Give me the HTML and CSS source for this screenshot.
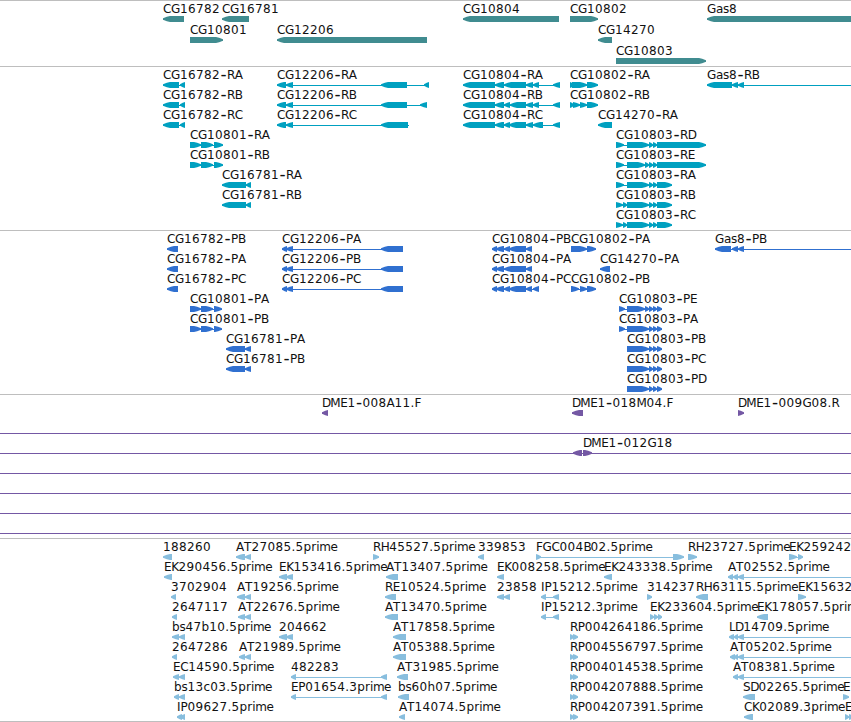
FILE: index.html
```
<!DOCTYPE html>
<html lang="en">
<head>
    <meta charset="UTF-8">
    <meta name="viewport" content="width=device-width, initial-scale=1.0">
    <title>Genome Tracks</title>
    <link rel="stylesheet" href="styles.css">
</head>
<body>

<main class="browser">
    <section class="track genes" id="genes"></section>
    <section class="track transcripts" id="transcripts"></section>
    <section class="track proteins" id="proteins"></section>
    <section class="track clones" id="clones"></section>
    <section class="track ests" id="ests"></section>
</main>

<script src="tracks.js"></script>
</body>
</html>
```
FILE: styles.css
```
body {
    margin: 0;
    background-color: #fff;
    overflow: hidden;
}
.browser {
    display: flex;
    flex-direction: column;
    width: 851px;
    height: 722px;
    overflow: hidden;
}
.track {
    box-sizing: border-box;
    border-top: 1px solid #bebebe;
    flex: none;
}
.track svg {
    display: block;
    width: 100%;
    height: 100%;
}
.genes {
    height: 66px;
    color: #408c90;
}
.transcripts {
    height: 164px;
    color: #00a0c0;
}
.proteins {
    height: 164px;
    color: #3070d0;
}
.clones {
    height: 144px;
    color: #7458a4;
}
.ests {
    height: 184px;
    color: #88bede;
    border-bottom: 1px solid #bebebe;
}
.label {
    font-family: "DejaVu Sans", sans-serif;
    font-size: 12px;
    fill: #111;
}
.label .dash {
    font-size: 17px;
}
.exon {
    fill: currentColor;
}
.intron {
    fill: currentColor;
    shape-rendering: crispEdges;
}
```
FILE: tracks.js
```
const SVG_NS = 'http://www.w3.org/2000/svg';
const VIEW_WIDTH = 851;
const HEAD = 7;

// Pixel advances for the labels, digits are 8
const ADVANCE = {
    A: 8, B: 7, C: 8, D: 8.2, E: 7.2, F: 6.5, G: 9, H: 8.5, I: 3.5, K: 7.2, L: 6, M: 10, P: 7, R: 7.8, S: 7.2, T: 7.5,
    a: 7, b: 7.6, c: 6.6, e: 7, h: 7.6, i: 3, m: 11.2, p: 7.7, r: 5, s: 6, '-': 7, '.': 4
};

// [row, label, direction, exons as start-end, end of the intron line]
const tracks = {
    genes: { step: 21, features: [
        [0, 'CG16782', '<', '163-184'],
        [0, 'CG16781', '<', '222-249'],
        [1, 'CG10801', '>', '190-223'],
        [1, 'CG12206', '<', '277-427'],
        [0, 'CG10804', '<', '463-559'],
        [0, 'CG10802', '>', '570-598'],
        [1, 'CG14270', '<', '598-612'],
        [2, 'CG10803', '>', '616-706'],
        [0, 'Gas8', '<', '707-870']
    ] },
    transcripts: { step: 20, features: [
        [0, 'CG16782-RA', '<', '163-179 180-185'],
        [1, 'CG16782-RB', '<', '163-179 180-185'],
        [2, 'CG16782-RC', '<', '163-179 180-185'],
        [3, 'CG10801-RA', '>', '190-201 201-213 214-223'],
        [4, 'CG10801-RB', '>', '190-201 201-213 214-223'],
        [5, 'CG16781-RA', '<', '222-246 246-251'],
        [6, 'CG16781-RB', '<', '222-246 246-251'],
        [0, 'CG12206-RA', '<', '277-286 286-293 381-407 424-429'],
        [1, 'CG12206-RB', '<', '277-286 286-293 381-407 420-427'],
        [2, 'CG12206-RC', '<', '277-286 286-293 381-408', 409],
        [0, 'CG10804-RA', '<', '463-495 495-504 504-526 526-533 533-539 553-560'],
        [1, 'CG10804-RB', '<', '463-495 495-504 504-510 510-526 526-533 533-539 553-560'],
        [2, 'CG10804-RC', '<', '463-495 495-504 504-510 509-526 526-533 533-543 553-560'],
        [0, 'CG10802-RA', '>', '570-574 572-587 587-598'],
        [1, 'CG10802-RB', '>', '570-574 573-580 580-587 587-598'],
        [2, 'CG14270-RA', '<', '598-612'],
        [3, 'CG10803-RD', '>', '616-624 627-649 649-653 653-657 657-706'],
        [4, 'CG10803-RE', '>', '616-624 627-645 645-649 649-653 653-657 657-706'],
        [5, 'CG10803-RA', '>', '616-624 627-649 649-653 653-657 657-672'],
        [6, 'CG10803-RB', '>', '616-623 623-627 627-649 649-653 653-657 657-672'],
        [7, 'CG10803-RC', '>', '616-623 623-627 627-649 649-653 653-657 657-672'],
        [0, 'Gas8-RB', '<', '707-732 732-738 738-744', 860]
    ] },
    proteins: { step: 20, features: [
        [0, 'CG16782-PB', '<', '167-178'],
        [1, 'CG16782-PA', '<', '167-178'],
        [2, 'CG16782-PC', '<', '167-178'],
        [3, 'CG10801-PA', '>', '190-201 201-213 214-222'],
        [4, 'CG10801-PB', '>', '190-201 201-213 214-222'],
        [5, 'CG16781-PA', '<', '226-245 245-251'],
        [6, 'CG16781-PB', '<', '226-245 245-251'],
        [0, 'CG12206-PA', '<', '282-287 286-293 381-403'],
        [1, 'CG12206-PB', '<', '282-287 286-293 381-403'],
        [2, 'CG12206-PC', '<', '282-287 286-293 381-403'],
        [0, 'CG10804-PB', '<', '492-497 496-504 504-510 509-526 526-532'],
        [1, 'CG10804-PA', '<', '492-497 496-504 504-526 526-532'],
        [2, 'CG10804-PC', '<', '492-497 496-504 504-510 509-526 526-532 533-539'],
        [0, 'CG10802-PA', '>', '571-587 587-596'],
        [2, 'CG10802-PB', '>', '571-579 580-587 587-596'],
        [1, 'CG14270-PA', '<', '600-610'],
        [3, 'CG10803-PE', '>', '619-625 627-645 645-649 649-653 653-657 657-662'],
        [4, 'CG10803-PA', '>', '619-625 627-649 649-653 653-657 657-662'],
        [5, 'CG10803-PB', '>', '627-649 649-653 653-657 657-662'],
        [6, 'CG10803-PC', '>', '627-649 649-653 653-657 657-662'],
        [7, 'CG10803-PD', '>', '627-649 649-653 653-657 657-662'],
        [0, 'Gas8-PB', '<', '715-731 732-738 738-744', 860]
    ] },
    clones: { step: 20, rules: [1, 2, 3, 4, 5, 6], features: [
        [0, 'DME1-008A11.F', '<', '322-328'],
        [0, 'DME1-018M04.F', '<', '572-583'],
        [0, 'DME1-009G08.R', '>', '738-744'],
        [2, '', '<', '573-582'],
        [2, 'DME1-012G18', '>', '583-592']
    ] },
    ests: { step: 20, features: [
        [0, '188260', '<', '163-172'],
        [1, 'EK290456.5prime', '<', '164-172'],
        [2, '3702904', '<', '171-176'],
        [3, '2647117', '<', '172-177'],
        [4, 'bs47b10.5prime', '<', '172-179 179-185'],
        [5, '2647286', '<', '172-177'],
        [6, 'EC14590.5prime', '<', '173-179 179-185'],
        [7, 'bs13c03.5prime', '<', '174-179 179-185'],
        [8, 'IP09627.5prime', '<', '177-182 180-185'],
        [0, 'AT27085.5prime', '<', '236-245 245-251'],
        [2, 'AT19256.5prime', '<', '237-245 245-251'],
        [3, 'AT22676.5prime', '<', '238-245 245-251'],
        [5, 'AT21989.5prime', '<', '239-245 245-251'],
        [1, 'EK153416.5prime', '<', '279-287 286-293'],
        [4, '204662', '<', '279-287 286-293'],
        [6, '482283', '<', '291-296 381-387'],
        [7, 'EP01654.3prime', '<', '291-296 381-387'],
        [0, 'RH45527.5prime', '>', '373-379'],
        [1, 'AT13407.5prime', '<', '386-398'],
        [2, 'RE10524.5prime', '<', '385-396'],
        [3, 'AT13470.5prime', '<', '385-398'],
        [4, 'AT17858.5prime', '<', '393-406'],
        [5, 'AT05388.5prime', '<', '393-406'],
        [6, 'AT31985.5prime', '<', '397-408'],
        [7, 'bs60h07.5prime', '<', '398-409'],
        [8, 'AT14074.5prime', '<', '399-405'],
        [0, '339853', '<', '478-484'],
        [1, 'EK008258.5prime', '<', '497-504'],
        [2, '23858', '<', '497-504 504-510'],
        [0, 'FGC004B02.5prime', '>', '536-541 673-684'],
        [1, 'EK243338.5prime', '<', '604-612'],
        [2, 'IP15212.5prime', '<', '541-546 553-559'],
        [3, 'IP15212.3prime', '<', '541-546 553-559'],
        [2, '314237', '>', '647-652'],
        [3, 'EK233604.5prime', '>', '650-654 654-658 658-662'],
        [4, 'RP004264186.5prime', '>', '570-574 573-578'],
        [5, 'RP004556797.5prime', '>', '570-574 573-578'],
        [6, 'RP004014538.5prime', '>', '570-574 573-578'],
        [7, 'RP004207888.5prime', '>', '570-574 573-578'],
        [8, 'RP004207391.5prime', '>', '570-574 573-578'],
        [0, 'RH23727.5prime', '>', '688-697'],
        [0, 'EK259242', '>', '789-797 798-803'],
        [1, 'AT02552.5prime', '<', '728-733 733-738 738-744', 860],
        [2, 'RH63115.5prime', '<', '696-708'],
        [2, 'EK15632', '>', '798-806'],
        [3, 'EK178057.5prime', '<', '757-768'],
        [4, 'LD14709.5prime', '<', '729-734 734-738 738-744', 860],
        [5, 'AT05202.5prime', '<', '730-735 734-738 738-744', 860],
        [6, 'AT08381.5prime', '<', '733-738 738-744', 860],
        [7, 'SD02265.5prime', '<', '743-755'],
        [7, 'E', '>', '843-849'],
        [8, 'CK02089.3prime', '<', '744-753'],
        [8, 'E', '>', '845-849 849-854']
    ] }
};

function add(parent, name, attrs) {
    const el = document.createElementNS(SVG_NS, name);
    for (const key in attrs) {
        el.setAttribute(key, attrs[key]);
    }
    parent.appendChild(el);
    return el;
}

function drawLine(svg, x, end, y) {
    add(svg, 'rect', { class: 'intron', x: x, y: y + 18, width: end - x, height: 1 });
}

// Blunt arrow: the head curves out from the tip to the full bar height
function drawExon(svg, x, end, y, direction) {
    const head = Math.min(HEAD, end - x);
    const left = direction === '<';
    const top = y + 15;
    const tip = left ? x : end;
    const neck = left ? x + head : end - head;
    const mid = left ? x + head * 0.55 : end - head * 0.55;
    const back = left ? end : x;
    add(svg, 'path', {
        class: 'exon',
        d: `M${tip} ${top + 2.3} L${mid} ${top + 0.8} L${neck} ${top} H${back} V${top + 6} H${neck} L${mid} ${top + 5.2} L${tip} ${top + 3.7} Z`
    });
}

function drawLabel(svg, text, x, y) {
    const label = add(svg, 'text', { class: 'label', y: y + 12 });
    for (const part of text.split(/(-)/)) {
        const positions = [];
        const dash = part === '-';
        for (const char of part) {
            positions.push(dash ? x + 0.5 : x);
            x += ADVANCE[char] || 8;
        }
        const span = add(label, 'tspan', { x: positions.join(' '), y: dash ? y + 13 : y + 12 });
        if (dash) {
            span.setAttribute('class', 'dash');
        }
        span.textContent = part;
    }
}

for (const id in tracks) {
    const track = tracks[id];
    const svg = add(document.getElementById(id), 'svg', {});

    (track.rules || []).forEach(row => drawLine(svg, 0, VIEW_WIDTH, row * track.step));

    track.features.forEach(([row, label, direction, exonList, lineEnd]) => {
        const y = row * track.step;
        const exons = exonList.split(' ').map(pair => pair.split('-').map(Number));
        drawLine(svg, exons[0][0], lineEnd || exons[exons.length - 1][1], y);
        exons.forEach(([x, end]) => drawExon(svg, x, end, y, direction));
        drawLabel(svg, label, exons[0][0], y);
    });
}
```
